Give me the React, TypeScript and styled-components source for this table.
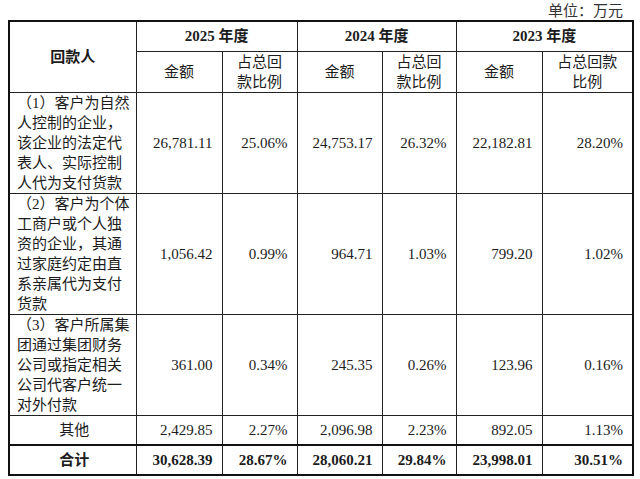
import React from "react";
import styled, { createGlobalStyle } from "styled-components";

const GlobalStyle = createGlobalStyle`
  html, body {
    margin: 0;
    padding: 0;
    background: #ffffff;
  }
  body {
    font-family: "Liberation Serif", "Noto Sans CJK SC", serif;
    color: #1c1c1c;
  }
`;

const Page = styled.div`
  width: 640px;
  height: 479px;
  padding: 0 8px 0 8px;
  box-sizing: border-box;
  overflow: hidden;
`;

const Unit = styled.div`
  height: 20px;
  padding-right: 9px;
  text-align: right;
  font-size: 15px;
  line-height: 22px;
  color: #333;
`;

const Table = styled.table`
  width: 624px;
  border-collapse: collapse;
  table-layout: fixed;
  border: 2px solid #111;
  font-size: 15px;
  line-height: 20px;
`;

const Row = styled.tr<{ $h: number; $thick?: boolean }>`
  height: ${({ $h }) => $h}px;
  ${({ $thick }) => ($thick ? "border-top: 2px solid #111;" : "")}
`;

const Head = styled.th`
  border: 1px solid #222;
  padding: 0 9px;
  font-weight: bold;
  text-align: center;
  vertical-align: middle;
`;

const SubHead = styled.th`
  border: 1px solid #222;
  padding: 0 8px;
  font-weight: normal;
  text-align: center;
  vertical-align: middle;
`;

const NameCell = styled.td<{ $center?: boolean; $bold?: boolean }>`
  border: 1px solid #222;
  padding: 0 4px 0 7px;
  text-align: ${({ $center }) => ($center ? "center" : "left")};
  font-weight: ${({ $bold }) => ($bold ? "bold" : "normal")};
  vertical-align: middle;
`;

const NumCell = styled.td<{ $bold?: boolean }>`
  border: 1px solid #222;
  padding: 0 9px 0 4px;
  text-align: right;
  font-weight: ${({ $bold }) => ($bold ? "bold" : "normal")};
  vertical-align: middle;
  white-space: nowrap;
`;

const Line = styled.span`
  display: block;
  white-space: nowrap;
`;

type DataRow = {
  name: string[];
  h: number;
  vals: string[];
  center?: boolean;
  bold?: boolean;
  thick?: boolean;
};

const rows: DataRow[] = [
  {
    name: ["（1）客户为自然", "人控制的企业，", "该企业的法定代", "表人、实际控制", "人代为支付货款"],
    h: 100,
    vals: ["26,781.11", "25.06%", "24,753.17", "26.32%", "22,182.81", "28.20%"],
  },
  {
    name: ["（2）客户为个体", "工商户或个人独", "资的企业，其通", "过家庭约定由直", "系亲属代为支付", "货款"],
    h: 120,
    vals: ["1,056.42", "0.99%", "964.71", "1.03%", "799.20", "1.02%"],
  },
  {
    name: ["（3）客户所属集", "团通过集团财务", "公司或指定相关", "公司代客户统一", "对外付款"],
    h: 101,
    vals: ["361.00", "0.34%", "245.35", "0.26%", "123.96", "0.16%"],
  },
  {
    name: ["其他"],
    h: 30,
    center: true,
    vals: ["2,429.85", "2.27%", "2,096.98", "2.23%", "892.05", "1.13%"],
  },
  {
    name: ["合计"],
    h: 30,
    center: true,
    bold: true,
    thick: true,
    vals: ["30,628.39", "28.67%", "28,060.21", "29.84%", "23,998.01", "30.51%"],
  },
];

const years = ["2025", "2024", "2023"];
const colWidths = [127, 86, 75, 85, 74, 86, 91];

export default function App() {
  return (
    <Page>
      <GlobalStyle />
      <Unit>单位：万元</Unit>
      <Table>
        <colgroup>
          {colWidths.map((w, i) => (
            <col key={i} style={{ width: w }} />
          ))}
        </colgroup>
        <thead>
          <Row $h={30}>
            <Head rowSpan={2}>回款人</Head>
            {years.map((y) => (
              <Head key={y} colSpan={2}>
                {y} 年度
              </Head>
            ))}
          </Row>
          <Row $h={41}>
            <SubHead>金额</SubHead>
            <SubHead>
              <Line>占总回</Line>
              <Line>款比例</Line>
            </SubHead>
            <SubHead>金额</SubHead>
            <SubHead>
              <Line>占总回</Line>
              <Line>款比例</Line>
            </SubHead>
            <SubHead>金额</SubHead>
            <SubHead>
              <Line>占总回款</Line>
              <Line>比例</Line>
            </SubHead>
          </Row>
        </thead>
        <tbody>
          {rows.map((r, i) => (
            <Row key={i} $h={r.h} $thick={r.thick}>
              <NameCell $center={r.center} $bold={r.bold}>
                {r.name.map((l, j) => (
                  <Line key={j}>{l}</Line>
                ))}
              </NameCell>
              {r.vals.map((v, j) => (
                <NumCell key={j} $bold={r.bold}>
                  {v}
                </NumCell>
              ))}
            </Row>
          ))}
        </tbody>
      </Table>
    </Page>
  );
}
